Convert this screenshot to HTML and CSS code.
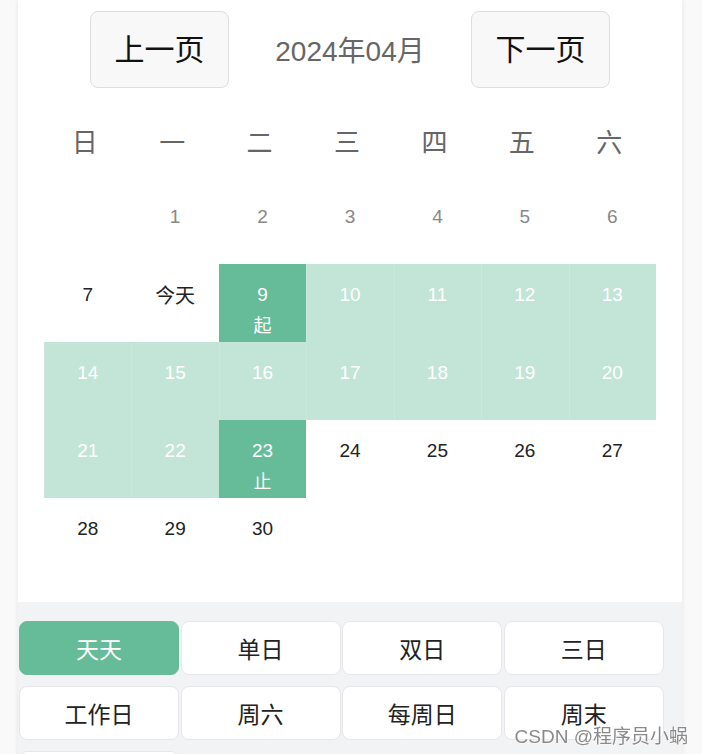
FILE: index.html
```html
<!DOCTYPE html>
<html lang="zh">
<head>
<meta charset="utf-8">
<link rel="stylesheet" href="styles.css">
</head>
<body>
<div class="page">
  <div class="header">
    <button class="nav-btn">上一页</button>
    <div class="title">2024年04月</div>
    <button class="nav-btn">下一页</button>
  </div>
  <div class="grid weekdays">
    <div class="cell wk">日</div><div class="cell wk">一</div><div class="cell wk">二</div><div class="cell wk">三</div><div class="cell wk">四</div><div class="cell wk">五</div><div class="cell wk">六</div>
  </div>
  <div class="grid days">
    <div class="cell"></div>
    <div class="cell past"><span class="num">1</span></div>
    <div class="cell past"><span class="num">2</span></div>
    <div class="cell past"><span class="num">3</span></div>
    <div class="cell past"><span class="num">4</span></div>
    <div class="cell past"><span class="num">5</span></div>
    <div class="cell past"><span class="num">6</span></div>

    <div class="cell"><span class="num">7</span></div>
    <div class="cell"><span class="num cn">今天</span></div>
    <div class="cell edge"><span class="num">9</span><span class="sub">起</span></div>
    <div class="cell range"><span class="num">10</span></div>
    <div class="cell range"><span class="num">11</span></div>
    <div class="cell range"><span class="num">12</span></div>
    <div class="cell range"><span class="num">13</span></div>

    <div class="cell range"><span class="num">14</span></div>
    <div class="cell range"><span class="num">15</span></div>
    <div class="cell range"><span class="num">16</span></div>
    <div class="cell range"><span class="num">17</span></div>
    <div class="cell range"><span class="num">18</span></div>
    <div class="cell range"><span class="num">19</span></div>
    <div class="cell range"><span class="num">20</span></div>

    <div class="cell range"><span class="num">21</span></div>
    <div class="cell range"><span class="num">22</span></div>
    <div class="cell edge"><span class="num">23</span><span class="sub">止</span></div>
    <div class="cell"><span class="num">24</span></div>
    <div class="cell"><span class="num">25</span></div>
    <div class="cell"><span class="num">26</span></div>
    <div class="cell"><span class="num">27</span></div>

    <div class="cell"><span class="num">28</span></div>
    <div class="cell"><span class="num">29</span></div>
    <div class="cell"><span class="num">30</span></div>
    <div class="cell"></div>
    <div class="cell"></div>
    <div class="cell"></div>
    <div class="cell"></div>
  </div>
  <div class="footer">
    <button class="opt active">天天</button>
    <button class="opt">单日</button>
    <button class="opt">双日</button>
    <button class="opt">三日</button>
    <button class="opt">工作日</button>
    <button class="opt">周六</button>
    <button class="opt">每周日</button>
    <button class="opt">周末</button>
    <button class="opt">自定义</button>
  </div>
</div>
<div class="watermark">CSDN @程序员小蜗</div>
</body>
</html>
```

FILE: styles.css
```css
html, body {
  margin: 0;
  padding: 0;
}
body {
  background: #f9f9f9;
  font-family: "Liberation Sans", "Noto Sans CJK SC", sans-serif;
  overflow: hidden;
  height: 754px;
}
.page {
  width: 664px;
  margin-left: 18px;
  background: #ffffff;
  box-shadow: 0 0 5px rgba(0, 0, 0, 0.09);
  padding-top: 11px;
}
.header {
  display: flex;
  justify-content: center;
  align-items: center;
  height: 77px;
}
.nav-btn {
  width: 139px;
  height: 77px;
  box-sizing: border-box;
  background: #f8f8f8;
  border: 1px solid #dedede;
  border-radius: 8px;
  font-family: "Noto Sans CJK SC", sans-serif;
  font-size: 30px;
  color: #111;
  padding: 0 0 6px 0;
  line-height: 1;
}
.title {
  width: 242px;
  text-align: center;
  font-size: 28px;
  color: #666;
  padding-bottom: 2px;
}
.grid {
  display: grid;
  grid-template-columns: repeat(7, 1fr);
  width: 612px;
  margin: 0 auto;
}
.weekdays {
  margin-top: 20px;
}
.cell {
  height: 78px;
  box-sizing: border-box;
  padding-top: 16px;
  display: flex;
  flex-direction: column;
  align-items: center;
  font-size: 19px;
  line-height: 30px;
  color: #222;
}
.cell.wk {
  padding-top: 18px;
  padding-right: 6px;
  font-family: "Noto Sans CJK SC", sans-serif;
  font-size: 26px;
  color: #666;
}
.cn, .sub {
  font-family: "Noto Sans CJK SC", sans-serif;
  font-size: 18px;
}
.cn {
  font-size: 20px;
}
.sub {
  margin-top: -1px;
}
.past {
  color: #888;
}
.range {
  background: #c3e5d7;
  color: #ffffff;
  box-shadow: inset 1px 0 0 rgba(255, 255, 255, 0.12);
}
.edge {
  background: #66bc99;
  color: #ffffff;
}
.footer {
  margin-top: 26px;
  background: #f2f3f5;
  padding: 19px 0 20px 1px;
  display: grid;
  grid-template-columns: repeat(4, 160px);
  column-gap: 1.6px;
  row-gap: 11px;
}
.opt {
  height: 54px;
  box-sizing: border-box;
  background: #ffffff;
  border: 1px solid #e6e7ea;
  border-radius: 8px;
  font-family: "Noto Sans CJK SC", sans-serif;
  font-size: 23px;
  color: #222;
  padding: 0;
}
.opt.active {
  background: #66bc99;
  border-color: #66bc99;
  color: #ffffff;
}
.watermark {
  position: fixed;
  right: 14px;
  bottom: 6px;
  font-family: "Liberation Sans", "Noto Sans CJK SC", sans-serif;
  font-size: 19px;
  color: #8a8a8a;
  text-shadow: 0 0 2px #fff, 0 0 2px #fff;
}
```
